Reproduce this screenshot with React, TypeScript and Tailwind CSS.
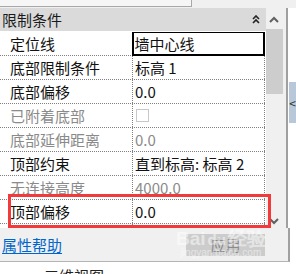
const font = { fontFamily: '"Noto Sans CJK SC", "Noto Sans", sans-serif' };

type Row = { label: string; value?: string; dim?: boolean; check?: boolean; active?: boolean };

const rows: Row[] = [
  { label: '定位线', value: '墙中心线', active: true },
  { label: '底部限制条件', value: '标高 1' },
  { label: '底部偏移', value: '0.0' },
  { label: '已附着底部', dim: true, check: true },
  { label: '底部延伸距离', value: '0.0', dim: true },
  { label: '顶部约束', value: '直到标高: 标高 2' },
  { label: '无连接高度', value: '4000.0', dim: true },
  { label: '顶部偏移', value: '0.0' },
  { label: '顶部附着对正', value: '最小相交', dim: true },
];

const Chevron = ({ up }: { up?: boolean }) => (
  <svg width="10" height="7" viewBox="0 0 10 7" fill="none" stroke="#606060" strokeWidth="2">
    <path d={up ? 'M1 6 L5 2 L9 6' : 'M1 1 L5 5 L9 1'} />
  </svg>
);

const PropRow = ({ r }: { r: Row }) => (
  <div className="flex h-[24px] shrink-0 border-b border-dotted border-[#808080]">
    <div
      className={`flex w-[133px] items-center border-r border-dotted border-[#808080] pl-[10px] ${r.dim ? 'text-[#8a8a8a]' : 'text-[#111]'}`}
    >
      {r.label}
    </div>
    {r.active ? (
      <div className="-mt-px -ml-px flex h-[25px] w-[134px] items-center border-2 border-black pl-[1px] text-[#111]">
        {r.value}
      </div>
    ) : (
      <div
        className={`flex w-[132px] items-center border-r border-dotted border-[#808080] pl-[2px] ${r.dim ? 'text-[#8a8a8a]' : 'text-[#111]'}`}
      >
        {r.check ? <span className="ml-[1px] block h-[13px] w-[13px] border border-[#c8c8c8] bg-white" /> : r.value}
      </div>
    )}
  </div>
);

export default function App() {
  return (
    <div className="relative h-[274px] w-[296px] overflow-hidden bg-white text-[15px] leading-none" style={font}>
      {/* strip above the panel */}
      <div className="flex h-[8px] bg-[#f0f0f0]">
        <div className="h-[7px] w-[192px] border-r border-b border-[#a8a8a8] bg-[#f6f6f6]" />
      </div>

      <div className="flex h-[220px]">
        <div className="flex w-[266px] flex-col">
          <div className="flex h-[23px] shrink-0 items-center justify-between bg-[#dadada] pl-[2px] pr-[6px] text-[#1a1a1a]">
            <span>限制条件</span>
            <svg width="8" height="9" viewBox="0 0 8 9" fill="none" stroke="#222" strokeWidth="1.6">
              <path d="M1 4 L4 1 L7 4 M1 8 L4 5 L7 8" />
            </svg>
          </div>
          <div className="flex flex-1 flex-col overflow-hidden border-t border-white bg-white pr-px">
            {rows.map((r) => (
              <PropRow key={r.label} r={r} />
            ))}
          </div>
        </div>

        {/* scrollbar */}
        <div className="flex w-[18px] flex-col bg-[#f0f0f0]">
          <div className="flex h-[21px] items-end justify-center pb-[6px]">
            <Chevron up />
          </div>
          <div className="h-[65px] bg-[#cdcdcd]" />
          <div className="flex-1" />
          <div className="flex h-[16px] items-start justify-center pt-[6px]">
            <Chevron />
          </div>
        </div>
        <div className="w-[4px] bg-[#f0f0f0]" />
        <div className="w-[2px] bg-[#a0a0a0]" />
        <div className="flex-1 bg-white pt-[74px] pl-[1px]">
          <div className="flex h-[41px] items-center bg-[#b9c8d8] text-[12px] text-[#333]">&lt;</div>
        </div>
      </div>

      {/* footer */}
      <div className="flex h-[34px] w-[290px] items-center justify-between border-r-2 border-b border-r-[#a0a0a0] border-b-[#b4b4b4] bg-[#f0f0f0] pl-[2px] pr-[23px]">
        <span className="text-[#0066cc] underline underline-offset-2">属性帮助</span>
        <div className="flex h-[22px] w-[79px] items-center justify-center bg-[#cccccc] text-[#8a8a8a]">应用</div>
      </div>

      <div className="pl-[44px] pt-[6px] text-[#222]">三维视图</div>

      {/* annotation box */}
      <div className="absolute top-[194px] left-[8px] h-[34px] w-[263px] border-[3px] border-[#f23a3a]" />

      {/* watermark */}
      <div className="pointer-events-none absolute top-[229px] left-[176px] flex flex-col items-center text-white opacity-50">
        <span className="text-[19px] font-bold leading-none" style={{ fontFamily: '"Liberation Sans", sans-serif' }}>
          Bai<span className="mx-[2px] text-[15px]">du</span>经验
        </span>
        <span className="text-[10px] leading-none" style={{ fontFamily: '"Liberation Sans", sans-serif' }}>
          jingyan.baidu.com
        </span>
      </div>
    </div>
  );
}
